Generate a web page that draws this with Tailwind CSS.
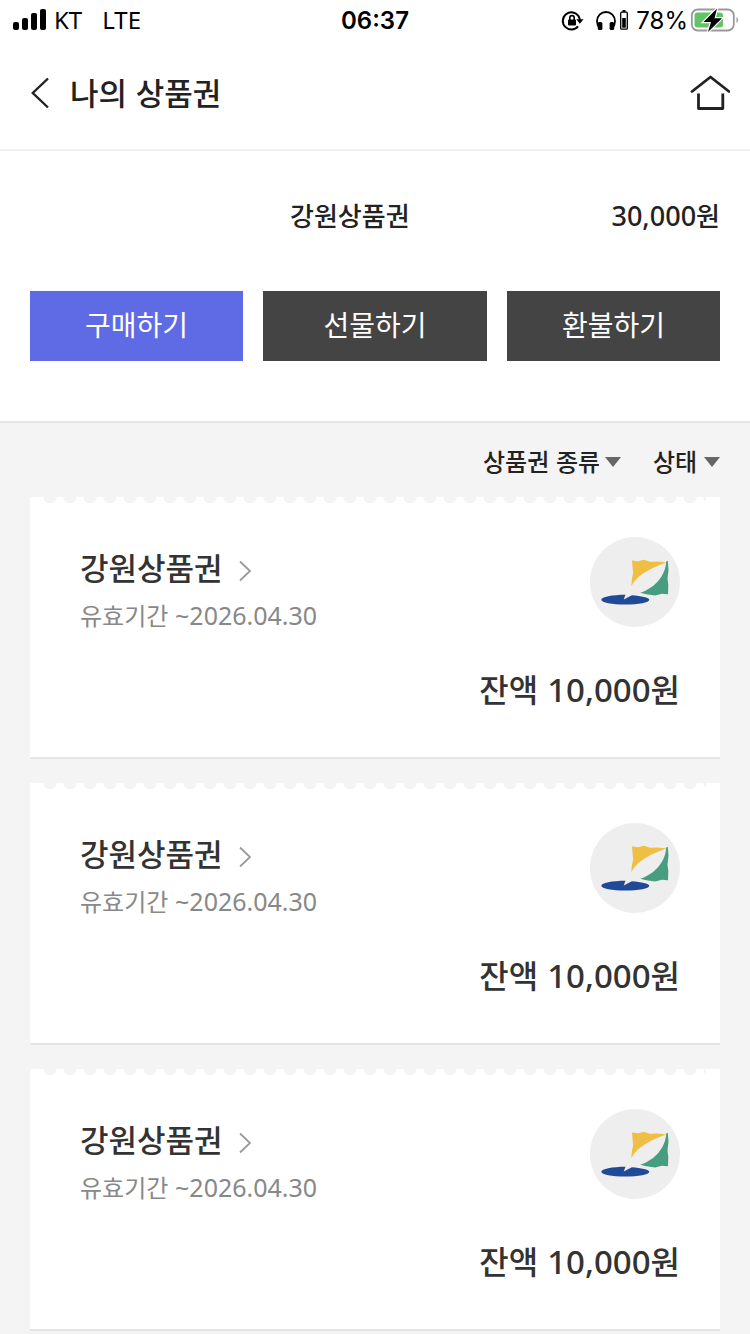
<!DOCTYPE html>
<html lang="ko">
<head>
  <meta charset="UTF-8" />
  <meta name="viewport" content="width=device-width, initial-scale=1.0" />
  <title>나의 상품권</title>
  <script src="https://cdn.jsdelivr.net/npm/@tailwindcss/browser@4"></script>
</head>
<body class="bg-[#f4f4f4] text-[#222] min-h-screen font-['Noto_Sans_CJK_KR','Noto_Sans',sans-serif]">

  <!-- Status bar -->
  <div class="bg-white text-black h-10 pl-3 pr-3 grid grid-cols-[1fr_auto_1fr] items-center text-2xl font-['Inter','Noto_Sans',sans-serif]">
    <div class="flex items-center font-['Noto_Sans']">
      <svg class="w-9 h-6" viewBox="0 0 36 24" fill="#000">
        <rect x="1" y="14" width="6" height="8" rx="2" />
        <rect x="10" y="10" width="6" height="12" rx="2" />
        <rect x="19" y="5" width="6" height="17" rx="2" />
        <rect x="28" y="1" width="6" height="21" rx="2" />
      </svg>
      <span class="ml-1.5">KT</span>
      <span class="ml-5">LTE</span>
    </div>
    <span class="font-semibold pt-0.5">06:37</span>
    <div class="flex items-center justify-end">
      <svg class="w-6 h-6 mr-3" viewBox="0 0 24 24" fill="none" stroke="#000" stroke-width="2">
        <path d="M18.6 8.2A8.6 8.6 0 1 0 18 18.4M18.6 8.2a8.6 8.6 0 0 1 1.2 4" />
        <path d="M16.3 11.2h7.2l-3.6 4.6z" fill="#000" stroke="none" />
        <rect x="8" y="11.5" width="8" height="6" rx="1" fill="#000" stroke="none" />
        <path d="M9.8 12v-2.2a2.2 2.2 0 0 1 4.4 0V12" stroke-width="1.6" />
      </svg>
      <svg class="w-5 h-6" viewBox="0 0 20 24" fill="none" stroke="#000" stroke-width="1.8">
        <path d="M3.600 20.500C1.600 18 1 15.500 1 13a9 9 0 0 1 18 0c0 2.500-.6 5-2.600 7.500" />
        <rect x="1.800" y="14" width="4.600" height="8" rx="1.500" fill="#000" stroke="none" />
        <rect x="13.600" y="14" width="4.600" height="8" rx="1.500" fill="#000" stroke="none" />
      </svg>
      <svg class="w-2 h-6 ml-1" viewBox="0 0 8 24">
        <rect x="2.500" y="2" width="3" height="2" fill="#000" />
        <rect x=".7" y="4.200" width="6.600" height="17" rx="1" fill="none" stroke="#000" stroke-width="1.300" />
        <rect x="2.200" y="10" width="3.600" height="9.700" fill="#000" />
      </svg>
      <span class="ml-2 mr-0.5 pt-0.5">78%</span>
      <svg class="w-12 h-6" viewBox="0 0 48 24">
        <rect x="1.800" y="1.500" width="42" height="21" rx="6" fill="none" stroke="#999" stroke-width="1.800" />
        <rect x="4.500" y="4.500" width="28.500" height="15" rx="3" fill="#62c466" />
        <path d="M46.500 9c2 1.500 2 4.500 0 6z" fill="#999" />
        <path d="M27 .5 13.500 14h7.500L18 24 32 10.300H24.500z" fill="#000" stroke="#fff" stroke-width="2.400" paint-order="stroke" />
      </svg>
    </div>
  </div>

  <!-- Header -->
  <header class="bg-white flex items-center justify-between px-5 pt-7 pb-[31px] border-b-2 border-[#f0f0f0]">
    <div class="flex items-center">
      <button type="button" aria-label="뒤로" class="p-2">
        <svg class="w-6 h-8" viewBox="0 0 24 32" fill="none" stroke="#222" stroke-width="2.400">
          <path d="M20 1.500 4.800 16 20 30.500" />
        </svg>
      </button>
      <h1 class="ml-2.5 text-[31px] leading-[48px] pb-0.5 font-medium">나의 상품권</h1>
    </div>
    <a href="#" aria-label="홈">
      <svg class="w-10 h-9" viewBox="0 0 40 36" fill="none" stroke="#222" stroke-width="2.800" stroke-linecap="round" stroke-linejoin="round">
        <path d="M2 16.500 20.500 2 39 16.500" />
        <path d="M8.500 18.500v15h24.300v-15" stroke-linecap="butt" />
      </svg>
    </a>
  </header>

  <!-- Balance and actions -->
  <section class="bg-white px-[30px] pt-11 pb-15 border-b-2 border-[#e5e5e5]">
    <dl class="flex justify-between text-[26px] leading-10 font-medium">
      <dt class="ml-[260px]">강원상품권</dt>
      <dd><span class="text-[27px] leading-none font-['Noto_Sans']">30,000</span>원</dd>
    </dl>
    <div class="grid grid-cols-[19fr_20fr_19fr] gap-5 mt-14 text-[28px] text-white">
      <button type="button" class="bg-[#5f6ae5] h-[70px] pb-1">구매하기</button>
      <button type="button" class="bg-[#444] h-[70px] pb-1">선물하기</button>
      <button type="button" class="bg-[#444] h-[70px] pb-1">환불하기</button>
    </div>
  </section>

  <main class="px-[30px]">
    <!-- Filters -->
    <form class="flex justify-end gap-8 h-[74px] pt-0.5 items-center text-2xl font-medium">
      <div class="flex items-center gap-1.5">
        <select aria-label="상품권 종류" class="appearance-none h-12"><option>상품권 종류</option></select>
        <svg class="w-4 h-2.5 mt-0.5" viewBox="0 0 16 10"><path d="M0 0h16L8 10z" fill="#666" /></svg>
      </div>
      <div class="flex items-center gap-1.5">
        <select aria-label="상태" class="appearance-none h-12"><option>상태</option></select>
        <svg class="w-4 h-2.5 mt-0.5" viewBox="0 0 16 10"><path d="M0 0h16L8 10z" fill="#666" /></svg>
      </div>
    </form>

    <!-- Voucher list -->
    <ul class="flex flex-col gap-6 text-[#333]">
      <li class="bg-white border-b-2 border-[#e5e5e5]">
        <div class="h-1.5 ml-2.5 mr-3.5 bg-[radial-gradient(circle_at_10px_0,#f4f4f4_6px,transparent_7px)] bg-[length:20px_6px]"></div>
        <div class="pl-[50px] pr-10 pt-[34px] pb-[45px]">
          <div class="flex justify-between">
            <div class="pt-1.5">
              <a href="#" class="flex items-center gap-4 text-[31px] leading-[48px] font-medium">
                강원상품권
                <svg class="w-3 h-6 mt-2" viewBox="0 0 12 24" fill="none" stroke="#999" stroke-width="1.800"><path d="M1 2.500 11 12 1 21.500" /></svg>
              </a>
              <p class="text-2xl leading-[48px] text-[#888]">유효기간 <span class="text-[25px] leading-none font-['Noto_Sans']">~2026.04.30</span></p>
            </div>
            <svg class="size-[90px]" viewBox="0 0 90 90">
              <circle cx="45" cy="45" r="45" fill="#eee" />
              <path d="M42 23.500l6 .8 6-1.600 6 2 7-.2 9.500.8C64 30.500 48 36 41.300 49.300l.6-7 1.200-6z" fill="#efbf45" />
              <path d="M76.200 24.500l1.600-.8.700 9-1 9 .8 6-.3 9.500-6.200-.4-6.500 1.800-9-1.300-6-1.600C66 50.500 75.500 38 76.200 24.500z" fill="#479d80" />
              <path d="M35.500 57.700l-1.800 4.700 8.200-4.200c9 .6 17.400 2.500 17.400 4.500 0 2.700-10.700 4.900-24 4.900s-24-2.200-24-4.900 10.900-5 24.200-5z" fill="#204997" />
            </svg>
          </div>
          <p class="mt-[25px] text-right text-[32px] leading-[48px] font-medium">잔액 <span class="text-[33px] leading-none font-['Noto_Sans']">10,000</span>원</p>
        </div>
      </li>
      <li class="bg-white border-b-2 border-[#e5e5e5]">
        <div class="h-1.5 ml-2.5 mr-3.5 bg-[radial-gradient(circle_at_10px_0,#f4f4f4_6px,transparent_7px)] bg-[length:20px_6px]"></div>
        <div class="pl-[50px] pr-10 pt-[34px] pb-[45px]">
          <div class="flex justify-between">
            <div class="pt-1.5">
              <a href="#" class="flex items-center gap-4 text-[31px] leading-[48px] font-medium">
                강원상품권
                <svg class="w-3 h-6 mt-2" viewBox="0 0 12 24" fill="none" stroke="#999" stroke-width="1.800"><path d="M1 2.500 11 12 1 21.500" /></svg>
              </a>
              <p class="text-2xl leading-[48px] text-[#888]">유효기간 <span class="text-[25px] leading-none font-['Noto_Sans']">~2026.04.30</span></p>
            </div>
            <svg class="size-[90px]" viewBox="0 0 90 90">
              <circle cx="45" cy="45" r="45" fill="#eee" />
              <path d="M42 23.500l6 .8 6-1.600 6 2 7-.2 9.500.8C64 30.500 48 36 41.300 49.300l.6-7 1.200-6z" fill="#efbf45" />
              <path d="M76.200 24.500l1.600-.8.700 9-1 9 .8 6-.3 9.500-6.200-.4-6.500 1.800-9-1.300-6-1.600C66 50.500 75.500 38 76.200 24.500z" fill="#479d80" />
              <path d="M35.500 57.700l-1.800 4.700 8.200-4.200c9 .6 17.400 2.500 17.400 4.500 0 2.700-10.700 4.900-24 4.900s-24-2.200-24-4.900 10.900-5 24.200-5z" fill="#204997" />
            </svg>
          </div>
          <p class="mt-[25px] text-right text-[32px] leading-[48px] font-medium">잔액 <span class="text-[33px] leading-none font-['Noto_Sans']">10,000</span>원</p>
        </div>
      </li>
      <li class="bg-white border-b-2 border-[#e5e5e5]">
        <div class="h-1.5 ml-2.5 mr-3.5 bg-[radial-gradient(circle_at_10px_0,#f4f4f4_6px,transparent_7px)] bg-[length:20px_6px]"></div>
        <div class="pl-[50px] pr-10 pt-[34px] pb-[45px]">
          <div class="flex justify-between">
            <div class="pt-1.5">
              <a href="#" class="flex items-center gap-4 text-[31px] leading-[48px] font-medium">
                강원상품권
                <svg class="w-3 h-6 mt-2" viewBox="0 0 12 24" fill="none" stroke="#999" stroke-width="1.800"><path d="M1 2.500 11 12 1 21.500" /></svg>
              </a>
              <p class="text-2xl leading-[48px] text-[#888]">유효기간 <span class="text-[25px] leading-none font-['Noto_Sans']">~2026.04.30</span></p>
            </div>
            <svg class="size-[90px]" viewBox="0 0 90 90">
              <circle cx="45" cy="45" r="45" fill="#eee" />
              <path d="M42 23.500l6 .8 6-1.600 6 2 7-.2 9.500.8C64 30.500 48 36 41.300 49.300l.6-7 1.200-6z" fill="#efbf45" />
              <path d="M76.200 24.500l1.600-.8.700 9-1 9 .8 6-.3 9.500-6.200-.4-6.500 1.800-9-1.300-6-1.600C66 50.500 75.500 38 76.200 24.500z" fill="#479d80" />
              <path d="M35.500 57.700l-1.800 4.700 8.200-4.200c9 .6 17.400 2.500 17.400 4.500 0 2.700-10.700 4.900-24 4.900s-24-2.200-24-4.900 10.900-5 24.200-5z" fill="#204997" />
            </svg>
          </div>
          <p class="mt-[25px] text-right text-[32px] leading-[48px] font-medium">잔액 <span class="text-[33px] leading-none font-['Noto_Sans']">10,000</span>원</p>
        </div>
      </li>
    </ul>
  </main>

</body>
</html>
